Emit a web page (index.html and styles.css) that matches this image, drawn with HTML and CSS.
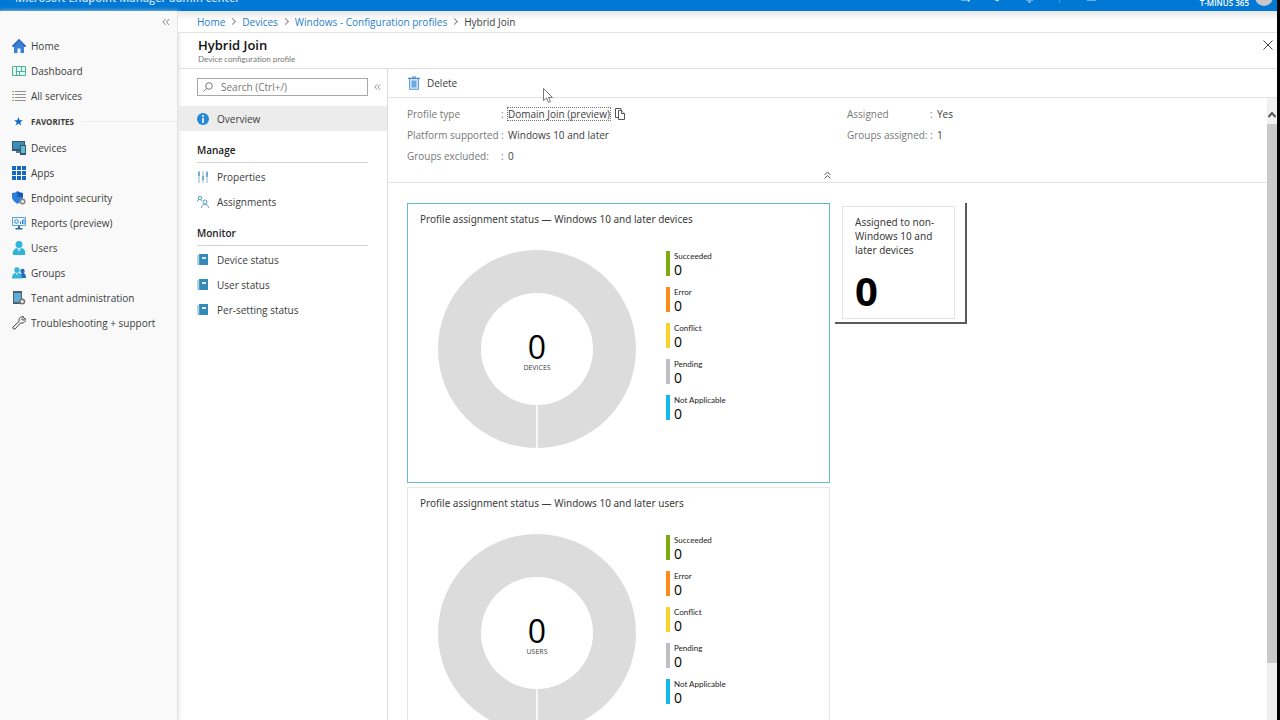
FILE: index.html
```html
<!DOCTYPE html>
<html lang="en">
<head>
<meta charset="utf-8">
<title>Hybrid Join</title>
<link rel="stylesheet" href="styles.css">
</head>
<body>
<header class="topbar">
  <span class="brand">Microsoft Endpoint Manager admin center</span>
  <span class="top-icons">
    <svg width="140" height="12" viewBox="0 0 140 12" fill="none" stroke="#cfe4f7"><path d="M1 7h8l-1 2M7 5l3 3M35 7l3 1 2-2M66 3v4h7V3M68 9h3"/><path d="M99.500 0v10" stroke="#4a9be0"/><path d="M127 3a5 5 0 0 0 9 0M127 7h9"/></svg>
  </span>
  <span class="tenant">T-MINUS 365</span>
  <span class="avatar"></span>
</header>
<div class="shell">
  <nav class="sidebar" aria-label="Main">
    <button class="collapse" aria-label="Collapse menu"><svg width="8" height="8" viewBox="0 0 8 8" fill="none" stroke="#888"><path d="M3.500 1 1 4l2.500 3M7 1 4.500 4 7 7"/></svg></button>
    <a class="nav-item" href="#"><svg class="nav-icon" viewBox="0 0 14 14"><path d="M7 0 14 7l-1 1h-1v6H8.500V9.500h-3V14H2V8H1L0 7z" fill="#3b7fd9"/><path d="M7 0 14 7l-1 1-6-6-6 6-1-1z" fill="#2a66bd"/></svg>Home</a>
    <a class="nav-item" href="#"><svg class="nav-icon" viewBox="0 0 14 14" fill="none" stroke="#4db39a"><path d="M.5 2.500h13v9H.5z" fill="#e6f7f2"/><path d="M4.500 3v8M5 7.500h8M9.500 3v4M7.500 8v3"/></svg>Dashboard</a>
    <a class="nav-item" href="#"><svg class="nav-icon" viewBox="0 0 14 14" fill="none" stroke="#929292"><path d="M3 2.500h11M3 5.500h11M3 8.500h11M3 11.500h11"/><path d="M0 2.500h2M0 5.500h2M0 8.500h2M0 11.500h2" stroke="#97a65e"/></svg>All services</a>
    <div class="favorites"><svg width="9" height="9" viewBox="0 0 10 10"><path d="m5 0 1.300 3.500H10L7 5.700 8.200 9.500 5 7.200 1.800 9.500 3 5.700 0 3.500h3.700z" fill="#1268c3"/></svg><span>FAVORITES</span></div>
    <a class="nav-item" href="#"><svg class="nav-icon" viewBox="0 0 14 14"><path d="M0 0h13v10H0z" fill="#34586e"/><path d="M1 1h11v7H1z" fill="#3d8cb8"/><path d="M4 10h4v2H4z" fill="#61798a"/><path d="M8 4h6v10H8z" fill="#34586e"/><path d="M9 5h4v7H9z" fill="#64b9dc"/></svg>Devices</a>
    <a class="nav-item" href="#"><svg class="nav-icon" viewBox="0 0 14 14" fill="#1769bf"><path d="M0 0h4v4H0zM5 0h4v4H5zM10 0h4v4h-4zM0 5h4v4H0zM5 5h4v4H5zM10 5h4v4h-4zM0 10h4v4H0zM5 10h4v4H5zM10 10h4v4h-4z"/></svg>Apps</a>
    <a class="nav-item" href="#"><svg class="nav-icon" viewBox="0 0 14 14"><path d="M0 2c3 0 4-1 5.500-2C7 1 8 2 11 2v4c0 3-3 5-5.500 7C3 11 0 9 0 6z" fill="#2d7ddd"/><path d="M5.500 0C7 1 8 2 11 2v4H5.500z" fill="#1559b3"/><circle cx="10.500" cy="10.500" r="2.300" fill="#eee" stroke="#858585" stroke-width="1.500"/></svg>Endpoint security</a>
    <a class="nav-item" href="#"><svg class="nav-icon" viewBox="0 0 14 14"><path d="M.5 1.500h13v8H.5z" fill="#eef7ff" stroke="#5aa2d6"/><circle cx="4.500" cy="5.500" r="1.800" fill="none" stroke="#2c7fd0"/><path d="M8.500 8V5.500M10.500 8V4M12 8V3" stroke="#2c7fd0"/><path d="M6 10h2v2h2.500v1.500h-7V12H6z" fill="#2467b0"/></svg>Reports (preview)</a>
    <a class="nav-item" href="#"><svg class="nav-icon" viewBox="0 0 14 14" fill="#30b4dc"><circle cx="7" cy="3.500" r="3.500"/><path d="M1 14c-1-4 2-7 4-7l2 2 2-2c3 0 5 3 4 7z"/><path d="m5 7 2 4 2-4z" fill="#b5e7f5"/></svg>Users</a>
    <a class="nav-item" href="#"><svg class="nav-icon" viewBox="0 0 14 14"><circle cx="10.500" cy="5" r="2.200" fill="#246bc0"/><path d="M8 12c0-3 1-5 3-5s3 2 3 5z" fill="#246bc0"/><circle cx="5" cy="4" r="2.700" fill="#35b5da"/><path d="M0 12.500c0-4 2-6 5-6s5 2 5 6z" fill="#35b5da"/><path d="m4 7 1 2.500L6 7z" fill="#c5edf7"/></svg>Groups</a>
    <a class="nav-item" href="#"><svg class="nav-icon" viewBox="0 0 14 14"><path d="M1 0h9v13H1z" fill="#4d6170"/><path d="M2 2h7v9H2z" fill="#5daed6"/><circle cx="10.200" cy="10.500" r="2.300" fill="#eee" stroke="#747474" stroke-width="1.500"/></svg>Tenant administration</a>
    <a class="nav-item" href="#"><svg class="nav-icon" viewBox="0 0 14 14" fill="none" stroke="#444"><path d="M12 1c-2-1-5 0-5 3v1.500L1 11c-1 1 1 3 2 2l5.500-6H10c3 0 4-3 3-5l-2 2.500L9.500 3z"/></svg>Troubleshooting + support</a>
  </nav>
  <main class="page">
    <nav class="crumbs" aria-label="Breadcrumb">
      <a href="#">Home</a><i></i><a href="#">Devices</a><i></i><a href="#">Windows - Configuration profiles</a><i></i><span>Hybrid Join</span>
    </nav>
    <div class="heading">
      <div><h1>Hybrid Join</h1><p>Device configuration profile</p></div>
      <button class="close" aria-label="Close"><svg width="10" height="10" viewBox="0 0 10 10" stroke="#444"><path d="m.5.5 9 9M9.500.5l-9 9"/></svg></button>
    </div>
    <div class="workspace">
      <nav class="menu" aria-label="Profile">
        <div class="search-row">
          <label class="search"><svg width="10" height="10" viewBox="0 0 10 10" fill="none" stroke="#777"><circle cx="6" cy="4" r="3.300"/><path d="M3.600 6.400.5 9.500"/></svg><input type="text" placeholder="Search (Ctrl+/)" aria-label="Search"></label>
          <button aria-label="Collapse"><svg width="7" height="8" viewBox="0 0 8 8" fill="none" stroke="#888"><path d="M3.500 1 1 4l2.500 3M7 1 4.500 4 7 7"/></svg></button>
        </div>
        <a class="menu-item active" href="#"><svg class="menu-icon" viewBox="0 0 12 12"><circle cx="6" cy="6" r="6" fill="#2288d4"/><path d="M6 2v2M6 5v5" stroke="#fff" stroke-width="1.600"/></svg>Overview</a>
        <h2>Manage</h2>
        <a class="menu-item" href="#"><svg class="menu-icon" viewBox="0 0 12 12" stroke="#b4cddd" stroke-width="1.500"><path d="M2 0v12M6 0v12M10 0v12"/><path d="M2 1v4M6 5v4M10 1v5" stroke="#5b9cc4" stroke-width="1.500"/></svg>Properties</a>
        <a class="menu-item" href="#"><svg class="menu-icon" viewBox="0 0 12 12" fill="none" stroke="#5ba0c4"><circle cx="3" cy="2" r="1.700"/><path d="M0 6c0-3 4-3 5-1"/><circle cx="8" cy="6" r="2"/><path d="M4.500 12c0-5 7-5 7 0"/></svg>Assignments</a>
        <h2>Monitor</h2>
        <a class="menu-item" href="#"><svg class="menu-icon" viewBox="0 0 12 12"><path d="M2 0h9v11H2z" fill="#3489b9"/><path d="M5 3h4v2H5z" fill="#d9edf7"/><path d="M0 2h3M0 4h3M0 6h3M0 8h3M0 10h3" stroke="#6fa6c3"/></svg>Device status</a>
        <a class="menu-item" href="#"><svg class="menu-icon" viewBox="0 0 12 12"><path d="M2 0h9v11H2z" fill="#3489b9"/><path d="M5 3h4v2H5z" fill="#d9edf7"/><path d="M0 2h3M0 4h3M0 6h3M0 8h3M0 10h3" stroke="#6fa6c3"/></svg>User status</a>
        <a class="menu-item" href="#"><svg class="menu-icon" viewBox="0 0 12 12"><path d="M2 0h9v11H2z" fill="#3489b9"/><path d="M5 3h4v2H5z" fill="#d9edf7"/><path d="M0 2h3M0 4h3M0 6h3M0 8h3M0 10h3" stroke="#6fa6c3"/></svg>Per-setting status</a>
      </nav>
      <section class="content">
        <div class="toolbar">
          <button class="delete"><svg width="12" height="14" viewBox="0 0 12 14"><path d="M1.500 3v10.300h9V3" fill="#d3e6f8" stroke="#5c9bdb"/><path d="M0 2.300h12M4 1h4" stroke="#4c8bcd" stroke-width="1.200"/><path d="M3.500 4.500h5v7h-5z" fill="#6fa8e0"/></svg>Delete</button>
        </div>
        <div class="scroll-area">
          <div class="scroll-body">
            <div class="essentials">
              <dl>
                <dt>Profile type</dt><dd><a class="focused" href="#">Domain Join (preview)</a><button aria-label="Copy"><svg width="10" height="12" viewBox="0 0 10 12" fill="#fff" stroke="#555"><path d="M3 9.500H.5v-9H6V2"/><path d="M3.500 2.500h3l3 3v6h-6z"/><path d="M6.500 2.500v3h3"/></svg></button></dd>
                <dt>Platform supported</dt><dd>Windows 10 and later</dd>
                <dt>Groups excluded:</dt><dd>0</dd>
              </dl>
              <dl class="narrow">
                <dt>Assigned</dt><dd>Yes</dd>
                <dt>Groups assigned:</dt><dd>1</dd>
              </dl>
              <button class="fold" aria-label="Collapse essentials"><svg width="7" height="8" viewBox="0 0 7 8" fill="none" stroke="#555"><path d="m.5 4 3-3 3 3M.5 7.500l3-3 3 3"/></svg></button>
            </div>
            <div class="tiles">
              <div class="charts">
                <article class="card selected">
                  <h3>Profile assignment status — Windows 10 and later devices</h3>
                  <div class="chart">
                    <div class="donut"><div class="hole"><strong>0</strong><span>DEVICES</span></div></div>
                    <dl class="legend">
                      <div class="ok"><dt>Succeeded</dt><dd>0</dd></div>
                      <div class="error"><dt>Error</dt><dd>0</dd></div>
                      <div class="conflict"><dt>Conflict</dt><dd>0</dd></div>
                      <div class="pending"><dt>Pending</dt><dd>0</dd></div>
                      <div class="na"><dt>Not Applicable</dt><dd>0</dd></div>
                    </dl>
                  </div>
                </article>
                <article class="card">
                  <h3>Profile assignment status — Windows 10 and later users</h3>
                  <div class="chart">
                    <div class="donut"><div class="hole"><strong>0</strong><span>USERS</span></div></div>
                    <dl class="legend">
                      <div class="ok"><dt>Succeeded</dt><dd>0</dd></div>
                      <div class="error"><dt>Error</dt><dd>0</dd></div>
                      <div class="conflict"><dt>Conflict</dt><dd>0</dd></div>
                      <div class="pending"><dt>Pending</dt><dd>0</dd></div>
                      <div class="na"><dt>Not Applicable</dt><dd>0</dd></div>
                    </dl>
                  </div>
                </article>
              </div>
              <div class="bevel"><article class="count"><h3>Assigned to non-Windows 10 and later devices</h3><strong>0</strong></article></div>
            </div>
          </div>
          <div class="scrollbar"><svg width="8" height="6" viewBox="0 0 8 6" fill="none" stroke="#555" stroke-width="2"><path d="m.5 5 3.500-4 3.500 4"/></svg><div class="thumb"></div></div>
        </div>
      </section>
    </div>
  </main>
</div>
<svg class="pointer" width="10" height="15" viewBox="0 0 10 15"><path d="M.5.5v12l3-2.500 2 4.500 2-1-2-4h4z" fill="#fff" stroke="#777"/></svg>
</body>
</html>
```
FILE: styles.css
```css
* { box-sizing: border-box; }
body {
  margin: 0;
  height: 100vh;
  overflow: hidden;
  display: flex;
  flex-direction: column;
  border-right: 3px solid #000;
  background: #fff;
  color: #3c3c3c;
  font: 10px/14px "Open Sans", "Noto Sans", sans-serif;
}
a { color: inherit; text-decoration: none; }
button { border: 0; padding: 0; background: none; font: inherit; color: inherit; display: flex; align-items: center; }
h1, h2, h3, p, dl, dd { margin: 0; }
svg { flex: none; display: block; }

.topbar { height: 11px; flex: none; display: flex; align-items: flex-end; padding: 0 4px 0 15px; background: #0078d4; color: #fff; overflow: hidden; }
.brand { font-size: 11px; line-height: 16px; font-weight: 600; padding-bottom: 5px; color: #c5e0f6; }
.top-icons { margin-left: auto; padding-bottom: 6px; }
.tenant { margin-left: 100px; font-size: 8px; line-height: 10px; padding-bottom: 3px; font-weight: 600; }
.avatar { width: 18px; height: 18px; border-radius: 50%; background: #c8c6c8; margin: 0 0 5px 6px; flex: none; }

.shell { flex: 1; display: flex; min-height: 0; }
.sidebar { width: 178px; flex: none; background: #f9f9f9; border-right: 1px solid #e3e3e3; box-shadow: 0 0 4px #ccc; }
.collapse { margin-left: auto; margin-right: 7px; height: 22px; }
.nav-item { display: flex; align-items: center; gap: 5px; height: 25px; padding-left: 12px; }
.nav-icon { width: 14px; height: 14px; }
.favorites { display: flex; align-items: center; height: 27px; padding-left: 14px; gap: 8px; font-size: 8px; font-weight: 700; }
.favorites::after { content: ""; flex: 1; height: 1px; background: #eaeaea; }

.page { flex: 1; min-width: 0; display: flex; flex-direction: column; }
.crumbs { height: 22px; flex: none; display: flex; align-items: center; gap: 4px; padding-left: 19px; border-bottom: 1px solid #e4e4e4; background: linear-gradient(#e6e6e6, #fff 9px); }
.crumbs a { color: #2580c8; }
.crumbs i { width: 5px; height: 5px; margin: 0 3px 0 1px; border: solid #888; border-width: 1px 1px 0 0; transform: rotate(45deg); }
.heading { height: 36px; flex: none; display: flex; justify-content: space-between; padding: 4px 4px 0 20px; border-bottom: 1px solid #dedede; }
.heading h1 { font-size: 13px; line-height: 17px; font-weight: 600; color: #111; }
.heading p { font-family: Lato, sans-serif; font-size: 8px; line-height: 10px; color: #777; }
.close { height: 16px; }

.workspace { flex: 1; display: flex; min-height: 0; }
.menu { width: 210px; flex: none; border-right: 1px solid #dcdcdc; padding-top: 9px; }
.search-row { display: flex; align-items: center; gap: 6px; padding-left: 19px; margin-bottom: 10px; }
.search { display: flex; align-items: center; gap: 8px; width: 171px; height: 18px; border: 1px solid #a8a8a8; padding-left: 5px; }
.search input { flex: 1; min-width: 0; border: 0; padding: 0; outline: 0; background: none; font: inherit; }
.search input::placeholder { color: #777; opacity: 1; }
.menu-item { display: flex; align-items: center; gap: 8px; height: 25px; padding-left: 19px; }
.menu-icon { width: 12px; height: 12px; }
.active { background: #ececec; }
.menu h2 { margin: 10px 19px 1px; height: 22px; padding-top: 2px; border-bottom: 1px solid #d2d2d2; font-size: 10px; line-height: 14px; font-weight: 600; color: #222; }

.content { flex: 1; min-width: 0; display: flex; flex-direction: column; }
.toolbar { height: 29px; flex: none; display: flex; align-items: center; padding-left: 20px; border-bottom: 1px solid #e4e4e4; }
.delete { gap: 7px; }
.scroll-area { flex: 1; display: flex; min-height: 0; }
.scroll-body { flex: 1; min-width: 0; overflow: hidden; }
.essentials { display: grid; grid-template-columns: 1fr 1fr; column-gap: 20px; padding: 5px 0 2px 19px; border-bottom: 1px solid #e4e4e4; }
.essentials dl { display: grid; grid-template-columns: 94px 1fr; grid-auto-rows: 21px; align-items: center; }
.essentials .narrow { grid-template-columns: 83px 1fr; align-content: start; }
.essentials dt { color: #777; }
.essentials dd { display: flex; align-items: center; gap: 5px; }
.essentials dd::before { content: ":"; width: 2px; color: #777; }
.focused { outline: 1px dotted #777; line-height: 12px; }
.fold { grid-column: 1 / -1; margin: 3px 0 0 -19px; height: 11px; justify-content: center; }
.tiles { display: flex; gap: 5px; padding: 20px 0 0 19px; }
.charts { display: flex; flex-direction: column; gap: 4px; width: 423px; }
.card { height: 280px; border: 1px solid #e6e6e6; padding: 8px 12px; }
.selected { border-color: #5fbdd0; }
.card h3, .count h3 { font-family: "Noto Sans", sans-serif; font-size: 10px; line-height: 14px; font-weight: 400; }
.chart { display: flex; gap: 30px; padding: 24px 0 0 18px; }
.donut { width: 198px; height: 198px; flex: none; border-radius: 50%; display: flex; align-items: center; justify-content: center; background: linear-gradient(#f6f6f6, #f6f6f6) bottom / 2px 50% no-repeat #dcdcdc; }
.hole { width: 112px; height: 112px; border-radius: 50%; background: #fff; display: flex; flex-direction: column; align-items: center; justify-content: center; padding-top: 5px; }
.hole strong { font-size: 32px; line-height: 32px; font-weight: 400; color: #000; }
.hole span { font-size: 7px; line-height: 10px; }
.legend { display: flex; flex-direction: column; gap: 11px; padding-top: 1px; }
.legend div { height: 25px; border-left: 4px solid; padding-left: 4px; }
.legend dt { font-family: Lato, sans-serif; font-size: 8px; line-height: 10px; color: #222; }
.legend dd { font-size: 14px; line-height: 18px; color: #000; }
.legend .ok { border-color: #80ab0c; }
.legend .error { border-color: #fb8c1c; }
.legend .conflict { border-color: #f8d32a; }
.legend .pending { border-color: #bebec6; }
.legend .na { border-color: #14b8ea; }
.bevel { width: 132px; height: 121px; border: solid #5a5a5a; border-width: 0 2px 2px 0; padding: 3px 10px 4px 7px; }
.count { height: 113px; border: 1px solid #e4e4e4; padding: 8px 12px; }
.count strong { display: block; margin-top: 7px; font-size: 40px; line-height: 54px; font-weight: 700; color: #000; }
.scrollbar { width: 10px; flex: none; background: #f0f0f0; display: flex; flex-direction: column; align-items: center; padding-top: 14px; gap: 6px; }
.thumb { width: 10px; height: 90%; max-height: calc(100% - 69px); background: #c9c9c9; }
.pointer { position: absolute; left: 543px; top: 88px; }
```
